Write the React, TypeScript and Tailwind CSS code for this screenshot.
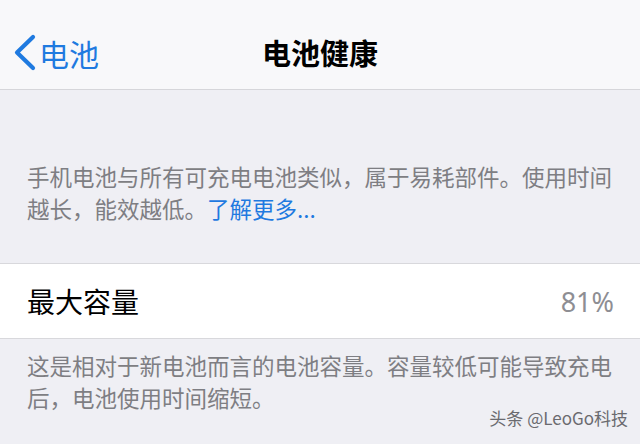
const font = { fontFamily: '"Noto Sans CJK SC", "Noto Sans", sans-serif' };

export default function App() {
  return (
    <div className="w-[640px] h-[444px] overflow-hidden bg-[#efeff4] relative" style={font}>
      {/* Nav bar */}
      <div className="h-[90px] pt-[16px] bg-[#f8f8fa] border-b border-[#d6d6da] grid grid-cols-[1fr_auto_1fr] items-center">
        <div className="flex items-center pl-[13px] text-[#1f7ae0]">
          <svg width="24" height="37" viewBox="0 0 24 37" fill="none">
            <polyline
              points="20,3 4,18.5 20,34"
              stroke="currentColor"
              strokeWidth="4.2"
              strokeLinecap="round"
              strokeLinejoin="round"
            />
          </svg>
          <span className="ml-[2px] text-[30px] leading-none">电池</span>
        </div>
        <div className="text-[29px] font-bold leading-none text-black">电池健康</div>
        <div />
      </div>

      {/* Description */}
      <div className="pt-[70px] pb-[39px] pl-[27px] pr-[20px] text-[22.5px] leading-[32px] text-[#7e7e83]">
        手机电池与所有可充电电池类似，属于易耗部件。使用时间越长，能效越低。
        <span className="text-[#1f7ae0]">了解更多...</span>
      </div>

      {/* Max capacity row */}
      <div className="h-[76px] bg-white border-y border-[#d8d8dc] flex items-center justify-between pl-[27px] pr-[26px]">
        <span className="text-[28px] text-black leading-none">最大容量</span>
        <span className="text-[27px] text-[#8e8e93] leading-none" style={{ fontFamily: '"Noto Sans", sans-serif' }}>
          81%
        </span>
      </div>

      {/* Footer text */}
      <div className="pt-[10px] pl-[27px] pr-[20px] text-[22.5px] leading-[32px] text-[#7e7e83]">
        这是相对于新电池而言的电池容量。容量较低可能导致充电后，电池使用时间缩短。
      </div>

      {/* Watermark overlay */}
      <div className="absolute right-[12px] bottom-[16px] text-[17px] leading-[21px] text-[#6a6a6f]">
        头条 @LeoGo科技
      </div>
    </div>
  );
}
